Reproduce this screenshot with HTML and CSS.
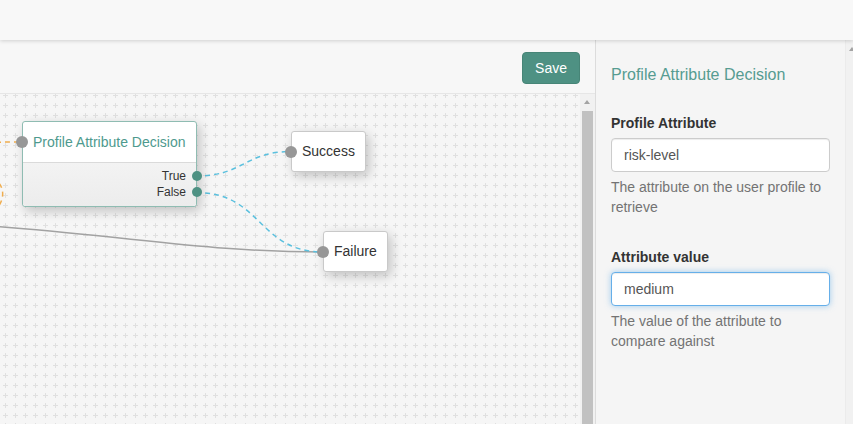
FILE: index.html
```html
<!DOCTYPE html>
<html>
<head>
<meta charset="utf-8">
<link rel="stylesheet" href="styles.css">
</head>
<body>
<div class="app">
  <header class="topbar"></header>
  <div class="main">
    <section class="editor">
      <div class="toolbar"><button class="btn-save">Save</button></div>
      <div class="stage">
        <div class="canvas">
          <svg class="wires" width="580" height="330">
            <defs>
              <pattern id="grid" width="10" height="10" patternUnits="userSpaceOnUse" patternTransform="translate(0,-4)">
                <rect x="3" y="5" width="5" height="1" fill="#e0e0e0"/>
                <rect x="5" y="3" width="1" height="5" fill="#e0e0e0"/>
              </pattern>
            </defs>
            <rect x="0" y="0" width="580" height="330" fill="url(#grid)"/>
            <path class="wire-gray" d="M -150 124 C 100 134, 180 158, 323 158"/>
            <path class="wire-orange" d="M -40 48.5 C -10 48.5, 0 48, 22 48"/>
            <path class="wire-orange" d="M -8 84 C 5 90, 5 104, -2 113"/>
            <path class="wire-blue" d="M 196 82 C 244 82, 244 57.5, 292 57.5"/>
            <path class="wire-blue" d="M 196 98.5 C 262 98.5, 258 158, 323 158"/>
          </svg>

          <div class="node decision" style="left:22px;top:27px">
            <div class="node-head">
              <span class="port port-in"></span>
              <span class="node-title">Profile Attribute Decision</span>
            </div>
            <div class="node-body">
              <div class="out-row">True<span class="port port-out"></span></div>
              <div class="out-row">False<span class="port port-out"></span></div>
            </div>
          </div>

          <div class="node leaf" style="left:291px;top:37px">
            <span class="port port-in"></span>Success
          </div>
          <div class="node leaf" style="left:323px;top:137px">
            <span class="port port-in"></span>Failure
          </div>
        </div>
        <div class="vscroll">
          <div class="vscroll-arrow"></div>
          <div class="vscroll-thumb"></div>
        </div>
      </div>
    </section>

    <aside class="sidebar">
      <div class="panel">
        <h4 class="panel-title">Profile Attribute Decision</h4>
        <div class="form-group">
          <label class="form-label">Profile Attribute</label>
          <input class="form-input" type="text" value="risk-level">
          <p class="help">The attribute on the user profile to retrieve</p>
        </div>
        <div class="form-group">
          <label class="form-label">Attribute value</label>
          <input class="form-input focused" type="text" value="medium">
          <p class="help">The value of the attribute to compare against</p>
        </div>
      </div>
      <div class="side-scroll"><div class="side-arrow"></div></div>
    </aside>
  </div>
</div>
</body>
</html>
```

FILE: styles.css
```css
* { box-sizing: border-box; }

html, body {
  margin: 0;
  padding: 0;
  height: 100%;
  overflow: hidden;
}

body {
  font-family: "Liberation Sans", Arial, Helvetica, sans-serif;
  font-size: 14px;
  line-height: 20px;
  color: #333;
  background: #f7f7f7;
}

.app {
  display: flex;
  flex-direction: column;
  height: 100vh;
}

.topbar {
  height: 40px;
  flex: none;
  background: #f8f8f8;
  box-shadow: 0 1px 4px rgba(0, 0, 0, 0.16);
  position: relative;
  z-index: 5;
}

.main {
  flex: 1;
  display: flex;
  min-height: 0;
}

/* ---------- editor ---------- */
.editor {
  width: 596px;
  flex: none;
  display: flex;
  flex-direction: column;
  border-right: 1px solid #dcdcdc;
}

.toolbar {
  height: 54px;
  flex: none;
  display: flex;
  justify-content: flex-end;
  align-items: flex-start;
  padding: 12px 15px 0 0;
  background: #f7f7f7;
  border-bottom: 1px solid #e6e6e6;
}

.btn-save {
  font-family: inherit;
  font-size: 14px;
  line-height: 20px;
  padding: 5px 12px;
  color: #fff;
  background: #4e9183;
  border: 1px solid #478577;
  border-radius: 4px;
}

.stage {
  flex: 1;
  display: flex;
  min-height: 0;
}

.canvas {
  position: relative;
  width: 580px;
  flex: none;
  background: #f6f6f6;
  overflow: hidden;
}

.wires {
  position: absolute;
  left: 0;
  top: 0;
  overflow: visible;
}

.wire-blue {
  fill: none;
  stroke: #5bc0de;
  stroke-width: 1.5;
  stroke-dasharray: 5 4;
}

.wire-orange {
  fill: none;
  stroke: #f0ad4e;
  stroke-width: 1.5;
  stroke-dasharray: 5 4;
}

.wire-gray {
  fill: none;
  stroke: #a2a2a2;
  stroke-width: 1.5;
}

.vscroll {
  width: 15px;
  flex: none;
  background: #f1f1f1;
  display: flex;
  flex-direction: column;
  align-items: flex-start;
}

.vscroll-arrow {
  margin: 6px 0 0 4px;
  width: 0;
  height: 0;
  border-left: 3.5px solid transparent;
  border-right: 3.5px solid transparent;
  border-bottom: 4px solid #a3a3a3;
}

.vscroll-thumb {
  margin: 7px 0 0 2px;
  width: 11px;
  flex: 1;
  background: #c1c1c1;
}

/* ---------- nodes ---------- */
.node {
  position: absolute;
  background: #fff;
  border-radius: 3px;
  box-shadow: 3px 4px 12px rgba(0, 0, 0, 0.22);
}

.decision {
  width: 175px;
  height: 86px;
  border: 1px solid #8fbcb2;
  display: flex;
  flex-direction: column;
}

.node-head {
  position: relative;
  height: 41px;
  flex: none;
  display: flex;
  align-items: center;
  padding-left: 10px;
  border-bottom: 1px solid #dadada;
}

.node-title {
  color: #4e9a8e;
  font-size: 14px;
  white-space: nowrap;
}

.node-body {
  flex: 1;
  background: linear-gradient(#f3f3f3, #ececec);
  padding-top: 5px;
  border-radius: 0 0 3px 3px;
}

.out-row {
  position: relative;
  height: 16px;
  line-height: 16px;
  font-size: 12px;
  text-align: right;
  padding-right: 10px;
  color: #333;
}

.port {
  position: absolute;
  border-radius: 50%;
}

.port-in {
  width: 12px;
  height: 12px;
  left: -7px;
  top: 50%;
  margin-top: -6px;
  background: #979797;
}

.port-out {
  width: 10px;
  height: 10px;
  right: -6px;
  top: 50%;
  margin-top: -5px;
  background: #4e9183;
}

.leaf {
  height: 41px;
  line-height: 39px;
  padding: 0 10px;
  border: 1px solid #c9c9c9;
  font-size: 14px;
  white-space: nowrap;
  color: #333;
}

/* ---------- sidebar ---------- */
.sidebar {
  flex: 1;
  display: flex;
  background: #f5f5f5;
  min-width: 0;
}

.panel {
  width: 249px;
  flex: none;
  padding: 26px 15px 0 15px;
}

.panel-title {
  margin: 0 0 29px 0;
  font-size: 16px;
  font-weight: normal;
  line-height: 17.6px;
  color: #569c91;
}

.form-group {
  margin-bottom: 30px;
}

.form-label {
  display: block;
  font-weight: bold;
  font-size: 14px;
  line-height: 20px;
  margin-bottom: 5px;
  color: #333;
}

.form-input {
  display: block;
  width: 100%;
  height: 34px;
  padding: 6px 12px;
  font-family: inherit;
  font-size: 14px;
  line-height: 20px;
  color: #555;
  background: #fff;
  border: 1px solid #ccc;
  border-radius: 4px;
  box-shadow: inset 0 1px 1px rgba(0, 0, 0, 0.075);
  outline: none;
}

.form-input.focused {
  border-color: #66afe9;
  box-shadow: inset 0 1px 1px rgba(0, 0, 0, 0.075), 0 0 6px rgba(102, 175, 233, 0.6);
}

.help {
  margin: 5px 0 10px 0;
  color: #737373;
  font-size: 14px;
  line-height: 20px;
}

.side-scroll {
  flex: 1;
  background: #f1f1f1;
  border-left: 1px solid #ebebeb;
}

.side-arrow {
  margin: 7px 0 0 3px;
  width: 0;
  height: 0;
  border-left: 3.5px solid transparent;
  border-right: 3.5px solid transparent;
  border-bottom: 4px solid #a3a3a3;
}
```
